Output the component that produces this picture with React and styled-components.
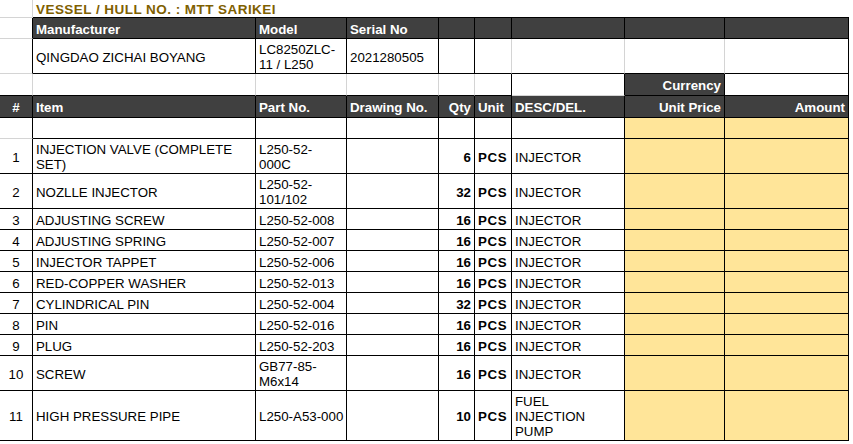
import React from 'react'
import styled, { createGlobalStyle } from 'styled-components'

const GlobalStyle = createGlobalStyle`
  html, body {
    margin: 0;
    padding: 0;
    background: #fff;
  }
  body {
    font-family: "Liberation Sans", Arial, sans-serif;
    font-size: 13.3px;
    color: #000;
  }
`

const LINES = { k: '#000', g: '#d4d4d4', n: 'transparent' }
const FILLS = { dark: '#404040', yellow: '#ffe599', white: '#fff' }
const COLUMNS = '33px 223px 91px 92px 36px 37px 113px 100px 124px'

const items = [
  { no: 1, item: 'INJECTION VALVE (COMPLETE\nSET)', part: 'L250-52-\n000C', qty: 6, desc: 'INJECTOR', h: 35 },
  { no: 2, item: 'NOZLLE INJECTOR', part: 'L250-52-\n101/102', qty: 32, desc: 'INJECTOR', h: 35 },
  { no: 3, item: 'ADJUSTING SCREW', part: 'L250-52-008', qty: 16, desc: 'INJECTOR', h: 21 },
  { no: 4, item: 'ADJUSTING SPRING', part: 'L250-52-007', qty: 16, desc: 'INJECTOR', h: 21 },
  { no: 5, item: 'INJECTOR TAPPET', part: 'L250-52-006', qty: 16, desc: 'INJECTOR', h: 21 },
  { no: 6, item: 'RED-COPPER WASHER', part: 'L250-52-013', qty: 16, desc: 'INJECTOR', h: 21 },
  { no: 7, item: 'CYLINDRICAL PIN', part: 'L250-52-004', qty: 32, desc: 'INJECTOR', h: 21 },
  { no: 8, item: 'PIN', part: 'L250-52-016', qty: 16, desc: 'INJECTOR', h: 21 },
  { no: 9, item: 'PLUG', part: 'L250-52-203', qty: 16, desc: 'INJECTOR', h: 21 },
  { no: 10, item: 'SCREW', part: 'GB77-85-\nM6x14', qty: 16, desc: 'INJECTOR', h: 35 },
  { no: 11, item: 'HIGH PRESSURE PIPE', part: 'L250-A53-000', qty: 10, desc: 'FUEL\nINJECTION\nPUMP', h: 50 },
]

function App() {
  return (
    <>
      <GlobalStyle />
      <Sheet>
        <Row $h={18}>
          <Cell $r="g" $b="g" />
          <Title $span={8}>VESSEL / HULL NO. : MTT SARIKEI</Title>
        </Row>

        <Row $h={21}>
          <Cell $r="k" $b="g" />
          <Cell $bg="dark" $bold>Manufacturer</Cell>
          <Cell $bg="dark" $bold>Model</Cell>
          <Cell $bg="dark" $bold>Serial No</Cell>
          <Cell $bg="dark" />
          <Cell $bg="dark" />
          <Cell $bg="dark" />
          <Cell $bg="dark" />
          <Cell $bg="dark" />
        </Row>

        <Row $h={35}>
          <Cell $r="k" $b="g" />
          <Cell>QINGDAO ZICHAI BOYANG</Cell>
          <Cell>{'LC8250ZLC-\n11 / L250'}</Cell>
          <Cell>2021280505</Cell>
          <Cell />
          <Cell $r="g" />
          <Cell $r="g" />
          <Cell $r="g" />
          <Cell />
        </Row>

        <Row $h={22}>
          <Cell $r="g" />
          <Cell $r="g" />
          <Cell $r="g" />
          <Cell $r="g" />
          <Cell $r="g" />
          <Cell />
          <Cell $b="g" />
          <Cell $bg="dark" $bold $align="flex-end">Currency</Cell>
          <Cell />
        </Row>

        <Row $h={22}>
          <Cell $bg="dark" $bold $align="center">#</Cell>
          <Cell $bg="dark" $bold>Item</Cell>
          <Cell $bg="dark" $bold>Part No.</Cell>
          <Cell $bg="dark" $bold>Drawing No.</Cell>
          <Cell $bg="dark" $bold $align="flex-end">Qty</Cell>
          <Cell $bg="dark" $bold>Unit</Cell>
          <Cell $bg="dark" $bold>DESC/DEL.</Cell>
          <Cell $bg="dark" $bold $align="flex-end">Unit Price</Cell>
          <Cell $bg="dark" $bold $align="flex-end">Amount</Cell>
        </Row>

        <Row $h={21}>
          <Cell $b="g" />
          <Cell />
          <Cell />
          <Cell />
          <Cell />
          <Cell />
          <Cell />
          <Cell $bg="yellow" />
          <Cell $bg="yellow" />
        </Row>

        {items.map(it => (
          <Row key={it.no} $h={it.h}>
            <Cell $align="center">{it.no}</Cell>
            <Cell>{it.item}</Cell>
            <Cell>{it.part}</Cell>
            <Cell />
            <Cell $bold $align="flex-end">{it.qty}</Cell>
            <Cell $bold $spread>PCS</Cell>
            <Cell>{it.desc}</Cell>
            <Cell $bg="yellow" />
            <Cell $bg="yellow" />
          </Row>
        ))}
      </Sheet>
    </>
  )
}

const Sheet = styled.div`
  display: flex;
  flex-direction: column;
  width: 849px;
`

const Row = styled.div`
  display: grid;
  grid-template-columns: ${COLUMNS};
  height: ${p => p.$h}px;
`

const Cell = styled.div`
  box-sizing: border-box;
  display: flex;
  align-items: center;
  justify-content: ${p => p.$align || 'flex-start'};
  padding: 2px 3px 0 3px;
  border-right: 1px solid ${p => LINES[p.$r || 'k']};
  border-bottom: 1px solid ${p => LINES[p.$b || 'k']};
  background: ${p => FILLS[p.$bg || 'white']};
  color: ${p => (p.$bg === 'dark' ? '#fff' : '#000')};
  font-weight: ${p => (p.$bold ? 700 : 400)};
  letter-spacing: ${p => (p.$spread ? '0.6px' : '0')};
  line-height: 15px;
  white-space: pre;
  overflow: hidden;
`

const Title = styled.div`
  grid-column: span ${p => p.$span};
  box-sizing: border-box;
  display: flex;
  align-items: center;
  padding: 1px 3px 0;
  border-bottom: 1px solid #000;
  color: #7f6000;
  font-size: 13.5px;
  letter-spacing: 0.45px;
  font-weight: 700;
  white-space: nowrap;
`

export default App
